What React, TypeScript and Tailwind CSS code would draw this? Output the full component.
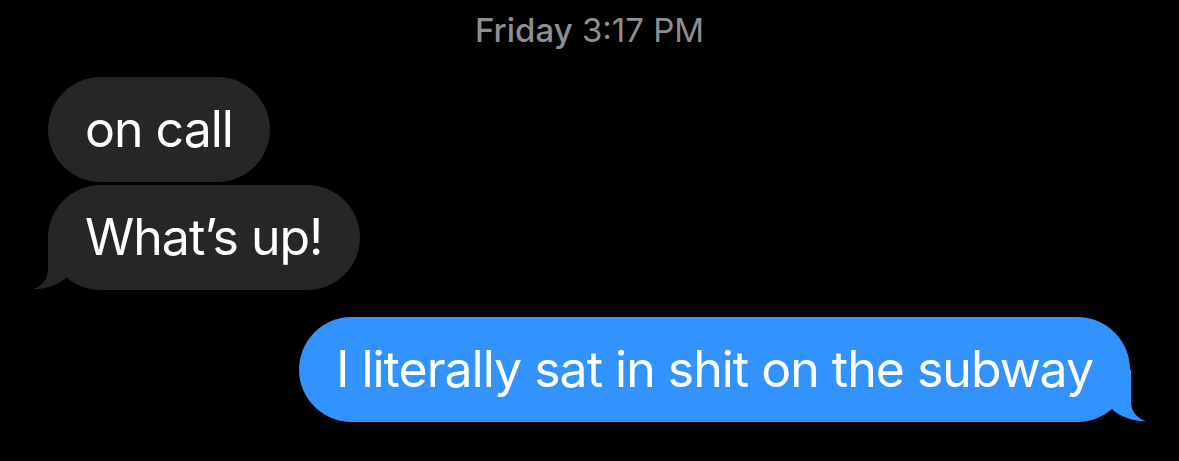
import React from "react";

const Tail: React.FC<{ side: "left" | "right"; color: string }> = ({ side, color }) => (
  <svg
    viewBox="0 0 48 52"
    className={
      side === "left"
        ? "absolute bottom-0 left-[-16px] h-[52px] w-[48px]"
        : "absolute bottom-0 right-[-17px] h-[52px] w-[48px] -scale-x-100"
    }
  >
    <path
      d="M16 0 L16 32 C16 42 9 49 0.7 51.3 C14 51.6 28 46 34.7 39.3 L44 4 Z"
      fill={color}
    />
  </svg>
);

type BubbleProps = {
  text: string;
  sent?: boolean;
  tail?: boolean;
};

const Bubble: React.FC<BubbleProps> = ({ text, sent, tail }) => (
  <div
    className={
      "relative flex h-[105px] items-center rounded-full px-[37px] text-[50px] tracking-[-1px] text-white " +
      (sent ? "bg-[#3293fe]" : "bg-[#262629]")
    }
  >
    <span className="relative whitespace-nowrap">{text}</span>
    {tail && <Tail side={sent ? "right" : "left"} color={sent ? "#3293fe" : "#262629"} />}
  </div>
);

export default function App() {
  return (
    <div className="h-[461px] w-[1179px] overflow-hidden bg-black font-['Inter',sans-serif]">
      <div className="pt-[10px] text-center text-[33px] leading-[40px] text-[#8e8e93]">
        <span className="font-medium">Friday</span> 3:17 PM
      </div>
      <div className="mt-[27px] flex flex-col items-start gap-[3px] pl-[48px]">
        <Bubble text="on call" />
        <Bubble text="What’s up!" tail />
      </div>
      <div className="mt-[27px] flex justify-end pr-[49px]">
        <Bubble text="I literally sat in shit on the subway" sent tail />
      </div>
    </div>
  );
}
